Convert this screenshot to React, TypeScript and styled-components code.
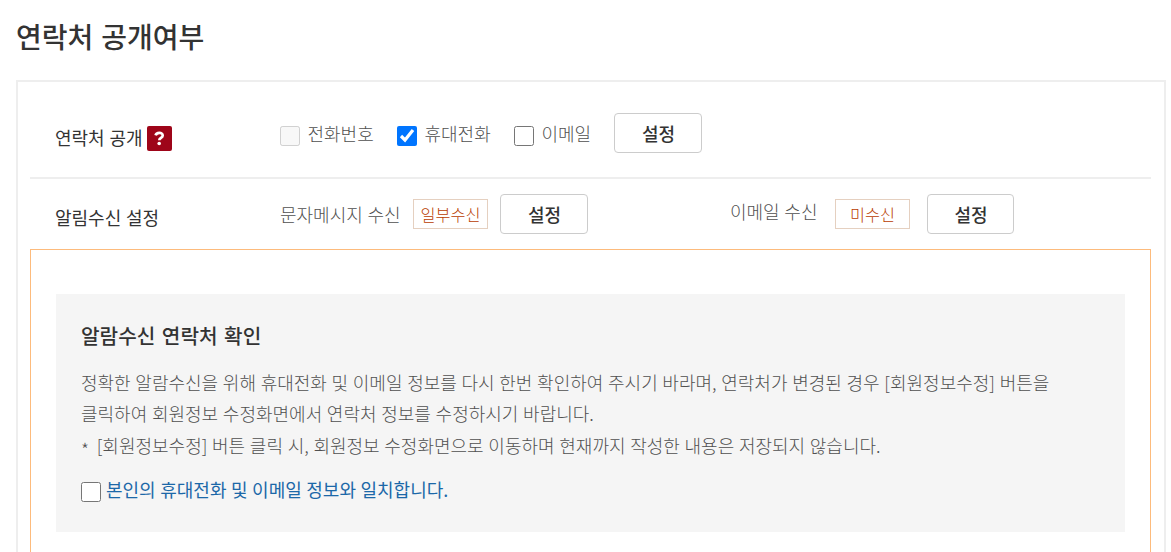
import { useState } from "react";
import styled, { createGlobalStyle } from "styled-components";

const theme = {
  white: "#fff",
  text: "#333",
  textLight: "#505050",
  line: "#eee",
  orange: "#fdbb7c",
  badgeText: "#b83c00",
  badgeLine: "#e5d0c0",
  buttonLine: "#ccc",
  boxBg: "#f5f5f5",
  help: "#9e0519",
  link: "#1c68a8",
};

const GlobalStyle = createGlobalStyle`
  * {
    box-sizing: border-box;
  }
  body {
    margin: 0;
    background-color: ${theme.white};
    font-family: "Noto Sans CJK KR", sans-serif;
    font-size: 18px;
    font-weight: 300;
    color: ${theme.textLight};
    word-spacing: 0.7px;
    overflow: hidden;
  }
`;

const Page = styled.div`
  height: 552px;
  padding: 0 5px 0 16px;
  display: flex;
  flex-direction: column;
  overflow: hidden;
`;

const Title = styled.h2`
  flex: none;
  height: 80px;
  margin: 0;
  padding-top: 16px;
  font-size: 28px;
  font-weight: 500;
  line-height: 40px;
  word-spacing: 1.6px;
  color: ${theme.text};
`;

const Panel = styled.div`
  flex: 1;
  padding: 0 13px 0 12px;
  border: 2px solid ${theme.line};
  border-bottom: 0;
`;

const Row = styled.div<{ $height: number; $line?: boolean }>`
  display: flex;
  align-items: flex-start;
  height: ${({ $height }) => $height}px;
  padding-left: 25px;
  border-bottom: ${({ $line }) => ($line ? `2px solid ${theme.line}` : "0")};
`;

const RowLabel = styled.div<{ $top: number }>`
  display: flex;
  align-items: flex-start;
  gap: 4px;
  width: 225px;
  height: 26px;
  margin-top: ${({ $top }) => $top}px;
  line-height: 24px;
  font-weight: 400;
  color: ${theme.text};
`;

const HelpIcon = styled.span`
  display: flex;
  width: 25px;
  height: 25px;
  margin-top: 1px;
  border-radius: 2px;
  background-color: ${theme.help};
`;

const CheckLabel = styled.label<{ $width: number }>`
  display: flex;
  align-items: center;
  gap: 7.5px;
  width: ${({ $width }) => $width}px;
  height: 26px;
  margin-top: 41px;
`;

const Checkbox = styled.input.attrs({ type: "checkbox" })`
  flex: none;
  width: 20px;
  height: 20px;
  margin: 0;
`;

const CheckText = styled.span`
  line-height: 26px;
  margin-top: -6px;
`;

const SettingButton = styled.button<{ $width?: number; $top: number }>`
  width: ${({ $width }) => $width ?? 88}px;
  height: 40px;
  margin: ${({ $top }) => $top}px 0 0;
  padding: 0 0 1px 1px;
  border: 1px solid ${theme.buttonLine};
  border-radius: 4px;
  background-color: ${theme.white};
  font-family: inherit;
  font-size: 18px;
  font-weight: 500;
  line-height: 26px;
  color: ${theme.text};
`;

const ReceiveText = styled.span<{ $width: number; $top: number }>`
  width: ${({ $width }) => $width}px;
  margin-top: ${({ $top }) => $top}px;
  line-height: 26px;
  white-space: nowrap;
`;

const Badge = styled.span<{ $gap: number }>`
  width: 75px;
  height: 30px;
  margin: 20px ${({ $gap }) => $gap}px 0 0;
  border: 1px solid ${theme.badgeLine};
  font-size: 16.3px;
  line-height: 28px;
  text-align: center;
  white-space: nowrap;
  color: ${theme.badgeText};
`;

const ReceiveGroup = styled.div<{ $width?: number }>`
  display: flex;
  align-items: flex-start;
  width: ${({ $width }) => ($width ? `${$width}px` : "auto")};
`;

const ConfirmArea = styled.div`
  height: 400px;
  padding: 44px 25px;
  border: 1px solid ${theme.orange};
`;

const ConfirmBox = styled.div`
  height: 238px;
  padding: 28px 25px 0;
  background-color: ${theme.boxBg};
`;

const ConfirmTitle = styled.h3`
  margin: 0 0 17px;
  font-size: 20.2px;
  font-weight: 500;
  line-height: 28px;
  word-spacing: 2px;
  color: ${theme.text};
`;

const ConfirmText = styled.p`
  margin: 0;
  line-height: 31.4px;
  white-space: nowrap;
`;

// the asterisk is dropped to the middle of the line
const Asterisk = styled.span`
  display: inline-block;
  width: 11px;
  line-height: 1;
  transform: translateY(4px);
`;

const AgreeLabel = styled.label`
  display: flex;
  align-items: center;
  gap: 5px;
  margin-top: 17.8px;
  height: 26px;
  font-weight: 400;
  word-spacing: 0.5px;
  color: ${theme.link};
`;

export default function ContactSettings() {
  const [mobile, setMobile] = useState(true);
  const [email, setEmail] = useState(false);
  const [agree, setAgree] = useState(false);

  return (
    <Page>
      <GlobalStyle />
      <Title>연락처 공개여부</Title>
      <Panel>
        <Row $height={97} $line>
          <RowLabel $top={43}>
            연락처 공개
            <HelpIcon>
              <svg width="25" height="25" viewBox="0 0 25 25" fill="none">
                <path
                  d="M8.6 9.4C9.3 6.2 15.7 5.9 15.7 9.5C15.7 12 12.3 11.8 12.3 14.2"
                  stroke="#fff"
                  strokeWidth="2.7"
                />
                <circle cx="12.2" cy="17.5" r="1.8" fill="#fff" />
              </svg>
            </HelpIcon>
          </RowLabel>
          <CheckLabel $width={117}>
            <Checkbox disabled />
            <CheckText>전화번호</CheckText>
          </CheckLabel>
          <CheckLabel $width={117}>
            <Checkbox
              checked={mobile}
              onChange={(e) => setMobile(e.target.checked)}
            />
            <CheckText>휴대전화</CheckText>
          </CheckLabel>
          <CheckLabel $width={100}>
            <Checkbox
              checked={email}
              onChange={(e) => setEmail(e.target.checked)}
            />
            <CheckText>이메일</CheckText>
          </CheckLabel>
          <SettingButton $top={31}>설정</SettingButton>
        </Row>
        <Row $height={70}>
          <RowLabel $top={26}>알림수신 설정</RowLabel>
          <ReceiveGroup $width={450}>
            <ReceiveText $width={133} $top={22}>
              문자메시지 수신
            </ReceiveText>
            <Badge $gap={12}>일부수신</Badge>
            <SettingButton $top={15}>설정</SettingButton>
          </ReceiveGroup>
          <ReceiveGroup>
            <ReceiveText $width={105} $top={19}>
              이메일 수신
            </ReceiveText>
            <Badge $gap={17}>미수신</Badge>
            <SettingButton $top={15} $width={87}>
              설정
            </SettingButton>
          </ReceiveGroup>
        </Row>
        <ConfirmArea>
          <ConfirmBox>
            <ConfirmTitle>알람수신 연락처 확인</ConfirmTitle>
            <ConfirmText>
              정확한 알람수신을 위해 휴대전화 및 이메일 정보를 다시 한번
              확인하여 주시기 바라며, 연락처가 변경된 경우 [회원정보수정]
              버튼을
              <br />
              클릭하여 회원정보 수정화면에서 연락처 정보를 수정하시기 바랍니다.
              <br />
              <Asterisk>*</Asterisk> [회원정보수정] 버튼 클릭 시, 회원정보
              수정화면으로 이동하며 현재까지 작성한 내용은 저장되지 않습니다.
            </ConfirmText>
            <AgreeLabel>
              <Checkbox
                checked={agree}
                onChange={(e) => setAgree(e.target.checked)}
              />
              <CheckText>본인의 휴대전화 및 이메일 정보와 일치합니다.</CheckText>
            </AgreeLabel>
          </ConfirmBox>
        </ConfirmArea>
      </Panel>
    </Page>
  );
}
